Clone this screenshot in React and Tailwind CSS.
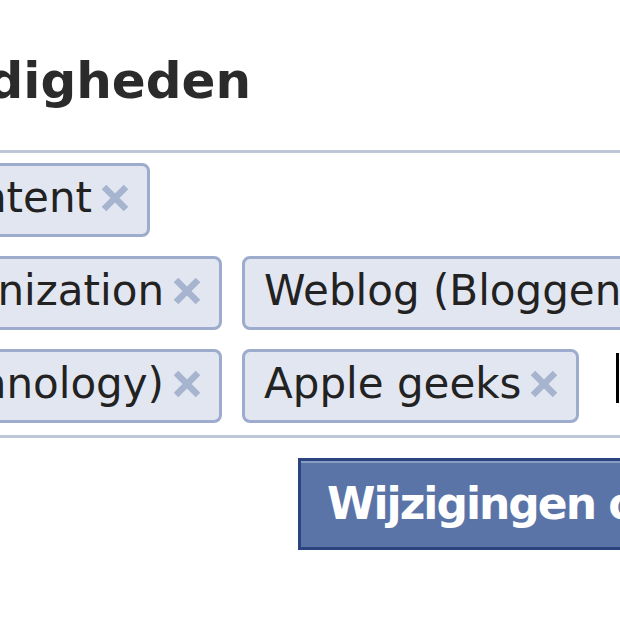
import React from 'react';

// Small grey-blue cross used to remove a token
const RemoveIcon = () => (
  <svg className="h-[30px] w-[30px] shrink-0" viewBox="0 0 30 30" aria-hidden>
    <path d="M4 4L26 26M26 4L4 26" stroke="#a7b4d0" strokeWidth="6.5" />
  </svg>
);

const Token = ({ label }) => (
  <span className="flex shrink-0 items-center gap-[8px] whitespace-nowrap rounded-[8px] border-[3px] border-[#9daccc] bg-[#e2e6f0] pb-[6px] pl-[19px] pr-[17px] pt-[2px] text-[42px] leading-[60px] text-[#222]">
    {label}
    <RemoveIcon />
  </span>
);

const ROWS = [
  { lead: 'Content', leadWidth: 'w-[150px]', rest: [] },
  { lead: 'Search Engine Organization', leadWidth: 'w-[222px]', rest: ['Weblog (Bloggen)'] },
  { lead: 'IT (Information Technology)', leadWidth: 'w-[222px]', rest: ['Apple geeks'], cursor: true },
];

export default function App() {
  return (
    <div className="h-[620px] w-[620px] overflow-hidden bg-white pt-[56px] font-['DejaVu_Sans',sans-serif]">
      <div className="flex h-[49px] w-[251px] justify-end">
        <h2 className="whitespace-nowrap text-[50px] font-bold leading-none text-[#2b2b2b]">Vaardigheden</h2>
      </div>

      <div className="mt-[45px] flex flex-col gap-[19px] border-y-[3px] border-[#bdc7d8] pb-[12px] pt-[10px]">
        {ROWS.map((row) => (
          <div key={row.lead} className="flex items-center gap-[20px]">
            <div className={`flex shrink-0 justify-end ${row.leadWidth}`}>
              <Token label={row.lead} />
            </div>
            {row.rest.map((label) => (
              <Token key={label} label={label} />
            ))}
            {row.cursor && <span className="ml-[17px] mt-[4px] h-[50px] w-[3px] shrink-0 self-start bg-black" />}
          </div>
        ))}
      </div>

      <div className="mt-[20px] flex pl-[298px]">
        <button
          type="button"
          className="flex h-[92px] shrink-0 items-center whitespace-nowrap border-[3px] border-[#29447e] bg-[#5b74a8] px-[26px] text-[44px] font-bold tracking-[-2px] text-white shadow-[inset_0_2px_0_#8a9cc2]"
        >
          Wijzigingen opslaan
        </button>
      </div>
    </div>
  );
}
